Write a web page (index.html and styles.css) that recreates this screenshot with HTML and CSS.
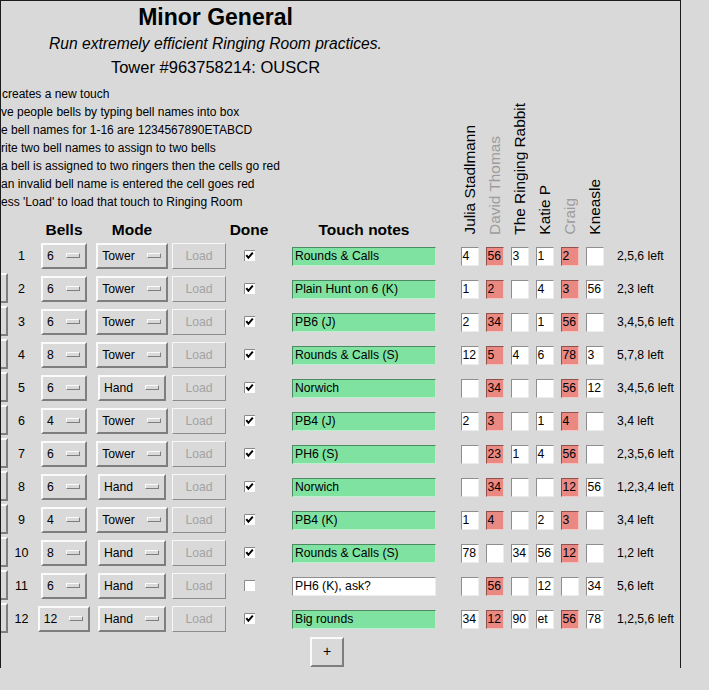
FILE: index.html
```html
<!DOCTYPE html>
<html>
<head>
<meta charset="utf-8">
<title>Minor General</title>
<link rel="stylesheet" href="styles.css">
</head>
<body>
<svg class="defs" width="0" height="0">
  <symbol id="box" viewBox="0 0 11 11">
    <rect x="0" y="0" width="11" height="11" fill="#ffffff"/>
    <path d="M0.5 11V0.5H11" fill="none" stroke="#8a8a8a"/>
  </symbol>
  <symbol id="ck" viewBox="0 0 11 11">
    <rect x="0" y="0" width="11" height="11" fill="#ffffff"/>
    <path d="M0.5 11V0.5H11" fill="none" stroke="#8a8a8a"/>
    <path d="M2.3 5.2L4.4 7.8L8.8 2.6" fill="none" stroke="#000" stroke-width="2"/>
  </symbol>
</svg>
<div class="frame">
  <div class="head">
    <div class="title">Minor General</div>
    <div class="sub">Run extremely efficient Ringing Room practices.</div>
    <div class="tower">Tower #963758214: OUSCR</div>
  </div>

  <div class="grid hgrid">
    <div class="instr">
      <div class="l1">creates a new touch</div>
      <div>ve people bells by typing bell names into box</div>
      <div>e bell names for 1-16 are 1234567890ETABCD</div>
      <div>rite two bell names to assign to two bells</div>
      <div>a bell is assigned to two ringers then the cells go red</div>
      <div>an invalid bell name is entered the cell goes red</div>
      <div>ess 'Load' to load that touch to Ringing Room</div>
    </div>
    <div class="name c8">Julia Stadlmann</div>
    <div class="name c9 dim">David Thomas</div>
    <div class="name c10">The Ringing Rabbit</div>
    <div class="name c11">Katie P</div>
    <div class="name c12 dim">Craig</div>
    <div class="name c13">Kneasle</div>
    <div class="hlabel c3">Bells</div>
    <div class="hlabel c4">Mode</div>
    <div class="hlabel c6">Done</div>
    <div class="hlabel c7">Touch notes</div>
  </div>

  <div class="grid dgrid">
    <!-- row 1 -->
    <div></div>
    <div class="num">1</div>
    <div class="dd"><span>6</span><i class="ind"></i></div>
    <div class="dd"><span>Tower</span><i class="ind"></i></div>
    <div class="load">Load</div>
    <svg class="chk"><use href="#ck"/></svg>
    <div class="note ok">Rounds &amp; Calls</div>
    <div class="cell">4</div><div class="cell bad">56</div><div class="cell">3</div><div class="cell">1</div><div class="cell bad">2</div><div class="cell"></div>
    <div class="rem">2,5,6 left</div>
    <!-- row 2 -->
    <div class="del"></div>
    <div class="num">2</div>
    <div class="dd"><span>6</span><i class="ind"></i></div>
    <div class="dd"><span>Tower</span><i class="ind"></i></div>
    <div class="load">Load</div>
    <svg class="chk"><use href="#ck"/></svg>
    <div class="note ok">Plain Hunt on 6 (K)</div>
    <div class="cell">1</div><div class="cell bad">2</div><div class="cell"></div><div class="cell">4</div><div class="cell bad">3</div><div class="cell">56</div>
    <div class="rem">2,3 left</div>
    <!-- row 3 -->
    <div class="del"></div>
    <div class="num">3</div>
    <div class="dd"><span>6</span><i class="ind"></i></div>
    <div class="dd"><span>Tower</span><i class="ind"></i></div>
    <div class="load">Load</div>
    <svg class="chk"><use href="#ck"/></svg>
    <div class="note ok">PB6 (J)</div>
    <div class="cell">2</div><div class="cell bad">34</div><div class="cell"></div><div class="cell">1</div><div class="cell bad">56</div><div class="cell"></div>
    <div class="rem">3,4,5,6 left</div>
    <!-- row 4 -->
    <div class="del"></div>
    <div class="num">4</div>
    <div class="dd"><span>8</span><i class="ind"></i></div>
    <div class="dd"><span>Tower</span><i class="ind"></i></div>
    <div class="load">Load</div>
    <svg class="chk"><use href="#ck"/></svg>
    <div class="note ok">Rounds &amp; Calls (S)</div>
    <div class="cell">12</div><div class="cell bad">5</div><div class="cell">4</div><div class="cell">6</div><div class="cell bad">78</div><div class="cell">3</div>
    <div class="rem">5,7,8 left</div>
    <!-- row 5 -->
    <div class="del"></div>
    <div class="num">5</div>
    <div class="dd"><span>6</span><i class="ind"></i></div>
    <div class="dd"><span>Hand</span><i class="ind"></i></div>
    <div class="load">Load</div>
    <svg class="chk"><use href="#ck"/></svg>
    <div class="note ok">Norwich</div>
    <div class="cell"></div><div class="cell bad">34</div><div class="cell"></div><div class="cell"></div><div class="cell bad">56</div><div class="cell">12</div>
    <div class="rem">3,4,5,6 left</div>
    <!-- row 6 -->
    <div class="del"></div>
    <div class="num">6</div>
    <div class="dd"><span>4</span><i class="ind"></i></div>
    <div class="dd"><span>Tower</span><i class="ind"></i></div>
    <div class="load">Load</div>
    <svg class="chk"><use href="#ck"/></svg>
    <div class="note ok">PB4 (J)</div>
    <div class="cell">2</div><div class="cell bad">3</div><div class="cell"></div><div class="cell">1</div><div class="cell bad">4</div><div class="cell"></div>
    <div class="rem">3,4 left</div>
    <!-- row 7 -->
    <div class="del"></div>
    <div class="num">7</div>
    <div class="dd"><span>6</span><i class="ind"></i></div>
    <div class="dd"><span>Tower</span><i class="ind"></i></div>
    <div class="load">Load</div>
    <svg class="chk"><use href="#ck"/></svg>
    <div class="note ok">PH6 (S)</div>
    <div class="cell"></div><div class="cell bad">23</div><div class="cell">1</div><div class="cell">4</div><div class="cell bad">56</div><div class="cell"></div>
    <div class="rem">2,3,5,6 left</div>
    <!-- row 8 -->
    <div class="del"></div>
    <div class="num">8</div>
    <div class="dd"><span>6</span><i class="ind"></i></div>
    <div class="dd"><span>Hand</span><i class="ind"></i></div>
    <div class="load">Load</div>
    <svg class="chk"><use href="#ck"/></svg>
    <div class="note ok">Norwich</div>
    <div class="cell"></div><div class="cell bad">34</div><div class="cell"></div><div class="cell"></div><div class="cell bad">12</div><div class="cell">56</div>
    <div class="rem">1,2,3,4 left</div>
    <!-- row 9 -->
    <div class="del"></div>
    <div class="num">9</div>
    <div class="dd"><span>4</span><i class="ind"></i></div>
    <div class="dd"><span>Tower</span><i class="ind"></i></div>
    <div class="load">Load</div>
    <svg class="chk"><use href="#ck"/></svg>
    <div class="note ok">PB4 (K)</div>
    <div class="cell">1</div><div class="cell bad">4</div><div class="cell"></div><div class="cell">2</div><div class="cell bad">3</div><div class="cell"></div>
    <div class="rem">3,4 left</div>
    <!-- row 10 -->
    <div class="del"></div>
    <div class="num">10</div>
    <div class="dd"><span>8</span><i class="ind"></i></div>
    <div class="dd"><span>Hand</span><i class="ind"></i></div>
    <div class="load">Load</div>
    <svg class="chk"><use href="#ck"/></svg>
    <div class="note ok">Rounds &amp; Calls (S)</div>
    <div class="cell">78</div><div class="cell"></div><div class="cell">34</div><div class="cell">56</div><div class="cell bad">12</div><div class="cell"></div>
    <div class="rem">1,2 left</div>
    <!-- row 11 -->
    <div class="del"></div>
    <div class="num">11</div>
    <div class="dd"><span>6</span><i class="ind"></i></div>
    <div class="dd"><span>Hand</span><i class="ind"></i></div>
    <div class="load">Load</div>
    <svg class="chk"><use href="#box"/></svg>
    <div class="note">PH6 (K), ask?</div>
    <div class="cell"></div><div class="cell bad">56</div><div class="cell"></div><div class="cell">12</div><div class="cell"></div><div class="cell">34</div>
    <div class="rem">5,6 left</div>
    <!-- row 12 -->
    <div class="del"></div>
    <div class="num">12</div>
    <div class="dd"><span>12</span><i class="ind"></i></div>
    <div class="dd"><span>Hand</span><i class="ind"></i></div>
    <div class="load">Load</div>
    <svg class="chk"><use href="#ck"/></svg>
    <div class="note ok">Big rounds</div>
    <div class="cell">34</div><div class="cell bad">12</div><div class="cell">90</div><div class="cell">et</div><div class="cell bad">56</div><div class="cell">78</div>
    <div class="rem">1,2,5,6 left</div>
  </div>

  <div class="addrow">
    <div class="add">+</div>
  </div>
</div>
</body>
</html>
```

FILE: styles.css
```css
html, body {
  margin: 0;
  padding: 0;
  background: #d9d9d9;
}

body {
  font-family: "Liberation Sans", Arial, sans-serif;
  color: #000;
}

.defs {
  position: absolute;
  width: 0;
  height: 0;
}

.frame {
  width: 681px;
  height: 668px;
  box-sizing: border-box;
  border: 1px solid #1c1c1c;
  border-bottom: none;
  overflow: hidden;
}

.head {
  width: 429px;
  text-align: center;
  padding-top: 1px;
}

.title {
  font-size: 23px;
  font-weight: bold;
  line-height: 30px;
}

.sub {
  font-size: 15.6px;
  font-style: italic;
  line-height: 24px;
}

.tower {
  font-size: 16.5px;
  line-height: 22px;
}

.grid {
  display: grid;
  grid-template-columns: 7px 27px 58px 78px 56px 44px 186px repeat(6, 25px) 1fr;
}

.hgrid {
  grid-template-rows: auto 28px;
}

.instr {
  grid-column: 1 / 8;
  grid-row: 1;
  margin-top: 7px;
  font-size: 12px;
  line-height: 18px;
  white-space: nowrap;
}

.instr .l1 {
  padding-left: 1px;
}

.name {
  grid-row: 1 / 3;
  align-self: end;
  justify-self: center;
  margin-bottom: 4px;
  writing-mode: vertical-rl;
  transform: rotate(180deg);
  font-size: 15.4px;
  line-height: 17px;
  white-space: nowrap;
}

.name.dim {
  color: #9c9c9c;
}

.c3 { grid-column: 3; }
.c4 { grid-column: 4; }
.c6 { grid-column: 6; }
.c7 { grid-column: 7; }
.c8 { grid-column: 8; }
.c9 { grid-column: 9; }
.c10 { grid-column: 10; }
.c11 { grid-column: 11; }
.c12 { grid-column: 12; }
.c13 { grid-column: 13; }

.hlabel {
  grid-row: 2;
  align-self: end;
  justify-self: center;
  font-size: 15.5px;
  font-weight: bold;
  line-height: 19px;
  white-space: nowrap;
}

.dgrid {
  grid-auto-rows: 33px;
  align-items: center;
  font-size: 12.2px;
}

.del {
  align-self: start;
  justify-self: start;
  width: 40px;
  height: 30px;
  margin-top: 1px;
  margin-left: -33px;
  box-sizing: border-box;
  border: 2px solid;
  border-color: #fbfbfb #7e7e7e #7e7e7e #fbfbfb;
}

.num {
  justify-self: center;
  font-size: 12.5px;
}

.dd {
  justify-self: center;
  display: flex;
  align-items: center;
  gap: 12px;
  height: 26px;
  box-sizing: border-box;
  padding: 0 5px 0 4px;
  border: 2px solid;
  border-color: #fbfbfb #7e7e7e #7e7e7e #fbfbfb;
  white-space: nowrap;
}

.ind {
  display: block;
  width: 14px;
  height: 5px;
  box-sizing: border-box;
  border: 1px solid;
  border-color: #fbfbfb #7e7e7e #7e7e7e #fbfbfb;
  background: #d9d9d9;
}

.load {
  justify-self: center;
  width: 54px;
  height: 26px;
  box-sizing: border-box;
  border: 1px solid;
  border-color: #f8f8f8 #8c8c8c #8c8c8c #f8f8f8;
  color: #a3a3a3;
  text-align: center;
  line-height: 24px;
}

.chk {
  justify-self: center;
  width: 11px;
  height: 11px;
}

.note {
  justify-self: center;
  width: 144px;
  height: 19px;
  margin-top: 2px;
  box-sizing: border-box;
  padding-left: 2px;
  border: 1px solid;
  border-color: #8e8e8e #ececec #ececec #8e8e8e;
  background: #ffffff;
  line-height: 17px;
  white-space: nowrap;
  overflow: hidden;
}

.note.ok {
  background: #7fe2a0;
  border-color: #4d8a61 #b9f1cd #b9f1cd #4d8a61;
}

.cell {
  justify-self: center;
  width: 18px;
  height: 19px;
  margin-top: 2px;
  box-sizing: border-box;
  padding-left: 1px;
  border: 1px solid;
  border-color: #8e8e8e #ececec #ececec #8e8e8e;
  background: #ffffff;
  line-height: 17px;
  white-space: nowrap;
  overflow: hidden;
}

.cell.bad {
  background: #ea8882;
  border-color: #8e524e #f5c4c0 #f5c4c0 #8e524e;
}

.rem {
  padding-left: 10px;
  white-space: nowrap;
}

.addrow {
  display: flex;
  padding-left: 309px;
  padding-top: 2px;
}

.add {
  width: 34px;
  height: 30px;
  box-sizing: border-box;
  border: 2px solid;
  border-color: #fbfbfb #7e7e7e #7e7e7e #fbfbfb;
  text-align: center;
  line-height: 25px;
  font-size: 14px;
}
```
